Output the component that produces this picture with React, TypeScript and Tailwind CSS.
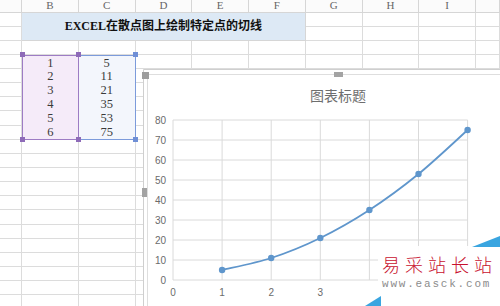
import React from "react";

const COLS = ["", "B", "C", "D", "E", "F", "G", "H", "I", ""];
const ROWS = 22;
const col1 = [1, 2, 3, 4, 5, 6];
const col2 = [5, 11, 21, 35, 53, 75];

// chart scale, page coordinates
const X0 = 173;
const XSTEP = 49.1;
const Y0 = 280;
const YSTEP = 2; // px per unit

const px = (v: number) => X0 + v * XSTEP;
const py = (v: number) => Y0 - v * YSTEP;

const smoothPath = (pts: [number, number][]) => {
  let d = `M${pts[0][0]},${pts[0][1]}`;
  for (let i = 0; i < pts.length - 1; i++) {
    const p0 = pts[i - 1] || pts[i];
    const p1 = pts[i];
    const p2 = pts[i + 1];
    const p3 = pts[i + 2] || p2;
    const t = 0.16;
    const c1x = p1[0] + (p2[0] - p0[0]) * t;
    const c1y = p1[1] + (p2[1] - p0[1]) * t;
    const c2x = p2[0] - (p3[0] - p1[0]) * t;
    const c2y = p2[1] - (p3[1] - p1[1]) * t;
    d += ` C${c1x},${c1y} ${c2x},${c2y} ${p2[0]},${p2[1]}`;
  }
  return d;
};

const Handle = ({ className }: { className: string }) => (
  <span className={`absolute w-[5px] h-[5px] ${className}`} />
);

const DataCol = ({ values, className, children }: { values: number[]; className: string; children?: React.ReactNode }) => (
  <div className={`relative row-start-5 row-span-6 grid grid-rows-6 ${className}`}>
    {values.map((v) => (
      <div
        key={v}
        className="min-h-0 flex items-center justify-center text-[12.5px] leading-none text-[#3a3a3a]"
        style={{ fontFamily: '"Liberation Serif", serif' }}
      >
        {v}
      </div>
    ))}
    {children}
  </div>
);

const Sheet = () => {
  // 220 cells minus the merged title (10) and the two data blocks (12)
  const cells: React.ReactNode[] = [];
  COLS.forEach((c, i) =>
    cells.push(
      <div
        key={`h${i}`}
        className="flex items-center justify-center border-r border-b border-[#d6d6d6] bg-[#fbfbfb] text-[11px] leading-none text-[#666]"
      >
        {c}
      </div>
    )
  );
  for (let i = 0; i < ROWS * COLS.length - 22 - 10; i++) {
    cells.push(<div key={`c${i}`} className="border-r border-b border-[#dcdcdc]" />);
  }

  return (
    <div
      className="grid grid-cols-[22px_repeat(8,56.75px)_1fr] grid-rows-[12.5px_repeat(21,14.15px)] w-[500px] h-[306px]"
      style={{ fontFamily: '"Liberation Serif", "Noto Sans CJK SC", serif' }}
    >
      <div className="col-start-2 col-span-5 row-start-2 row-span-2 flex items-center justify-center bg-[#dde9f5] border-r border-b border-[#d6d6d6] text-[12px] leading-none font-bold text-[#111]">
        EXCEL在散点图上绘制特定点的切线
      </div>

      <DataCol values={col1} className="col-start-2 bg-[#f5ebf9] border-[1.5px] border-[#9d7cc4]">
        <Handle className="-left-[3.5px] -top-[3.5px] bg-[#8e6bb8]" />
        <Handle className="-left-[3.5px] -bottom-[3.5px] bg-[#8e6bb8]" />
      </DataCol>
      <DataCol values={col2} className="col-start-3 bg-[#f3f6fc] border-[1.5px] border-l-0 border-[#7c9bdb]">
        <Handle className="-left-[3px] -top-[3.5px] bg-[#8e6bb8]" />
        <Handle className="-left-[3px] -bottom-[3.5px] bg-[#8e6bb8]" />
        <Handle className="-right-[3.5px] -top-[3.5px] bg-[#6f8fd6]" />
        <Handle className="-right-[3.5px] -bottom-[3.5px] bg-[#6f8fd6]" />
      </DataCol>

      {cells}
    </div>
  );
};

const Chart = () => {
  const pts: [number, number][] = col1.map((x, i) => [px(x), py(col2[i])]);
  const yTicks = [0, 10, 20, 30, 40, 50, 60, 70, 80];
  const xTicks = [0, 1, 2, 3, 4, 5, 6];
  // labels 4..6 sit under the watermark in the screenshot
  const xLabels = [0, 1, 2, 3];

  return (
    <div className="absolute left-[140px] top-[67px] w-[360px] h-[239px]">
      <svg width="360" height="239" viewBox="140 67 360 239" fontFamily='"Liberation Sans", Arial, sans-serif'>
        <rect x="143" y="69" width="357" height="237" fill="#fff" />
        <line x1="143.5" y1="69.5" x2="500" y2="69.5" stroke="#cfcfcf" />
        <line x1="143.5" y1="69.5" x2="143.5" y2="306" stroke="#cfcfcf" />
        <line x1="147.5" y1="74.5" x2="500" y2="74.5" stroke="#dedede" />
        <line x1="147.5" y1="74.5" x2="147.5" y2="306" stroke="#dedede" />
        <rect x="142" y="72" width="7" height="7" fill="#9d9d9d" />
        <rect x="334" y="72" width="9" height="5" fill="#a3a3a3" />
        <rect x="142" y="188" width="5" height="9" fill="#a3a3a3" />

        <text x="338" y="101" textAnchor="middle" fontSize="14" fill="#6e6e6e" fontFamily='"Noto Sans CJK SC", sans-serif'>
          图表标题
        </text>

        {yTicks.map((t) => (
          <g key={t}>
            <line x1={X0} y1={py(t)} x2={px(6)} y2={py(t)} stroke="#dadada" strokeWidth="1" />
            <text x="166" y={py(t) + 3.5} textAnchor="end" fontSize="10" fill="#6b6b6b">
              {t}
            </text>
          </g>
        ))}
        {xTicks.map((t) => (
          <line key={t} x1={px(t)} y1={py(80)} x2={px(t)} y2={Y0} stroke="#dadada" strokeWidth="1" />
        ))}
        {xLabels.map((t) => (
          <text key={t} x={px(t)} y="295.5" textAnchor="middle" fontSize="10" fill="#6b6b6b">
            {t}
          </text>
        ))}

        <path d={smoothPath(pts)} fill="none" stroke="#5f96cc" strokeWidth="1.8" />
        {pts.map(([x, y], i) => (
          <circle key={i} cx={x} cy={y} r="3.2" fill="#5f96cc" />
        ))}
      </svg>
    </div>
  );
};

const Watermark = () => (
  <div className="absolute left-[364px] top-[235px] w-[136px] h-[71px]">
    <svg className="absolute inset-0" width="136" height="71" viewBox="364 235 136 71">
      <polygon points="378,246 500,246 500,306 366,306 366,284 378,284" fill="#fff" fillOpacity="0.94" />
      <polygon points="472,247 500,236 500,247" fill="#3aa5e0" />
      <polygon points="365,306 381,296 381,306" fill="#3aa5e0" />
    </svg>
    <div className="absolute left-[18px] top-[20px] flex flex-col gap-[6px]">
      <div
        className="text-[18px] leading-none tracking-[5px] text-[#c8102e]"
        style={{ fontFamily: '"Noto Sans CJK SC", sans-serif', fontWeight: 300 }}
      >
        易采站长站
      </div>
      <div
        className="text-[11px] leading-none tracking-[1.8px] text-[#8c8c8c]"
        style={{ fontFamily: '"Liberation Mono", monospace' }}
      >
        www.easck.com
      </div>
    </div>
  </div>
);

const App = () => {
  return (
    <div className="relative w-[500px] h-[306px] overflow-hidden bg-white">
      <Sheet />
      <Chart />
      <Watermark />
    </div>
  );
};

export default App;
